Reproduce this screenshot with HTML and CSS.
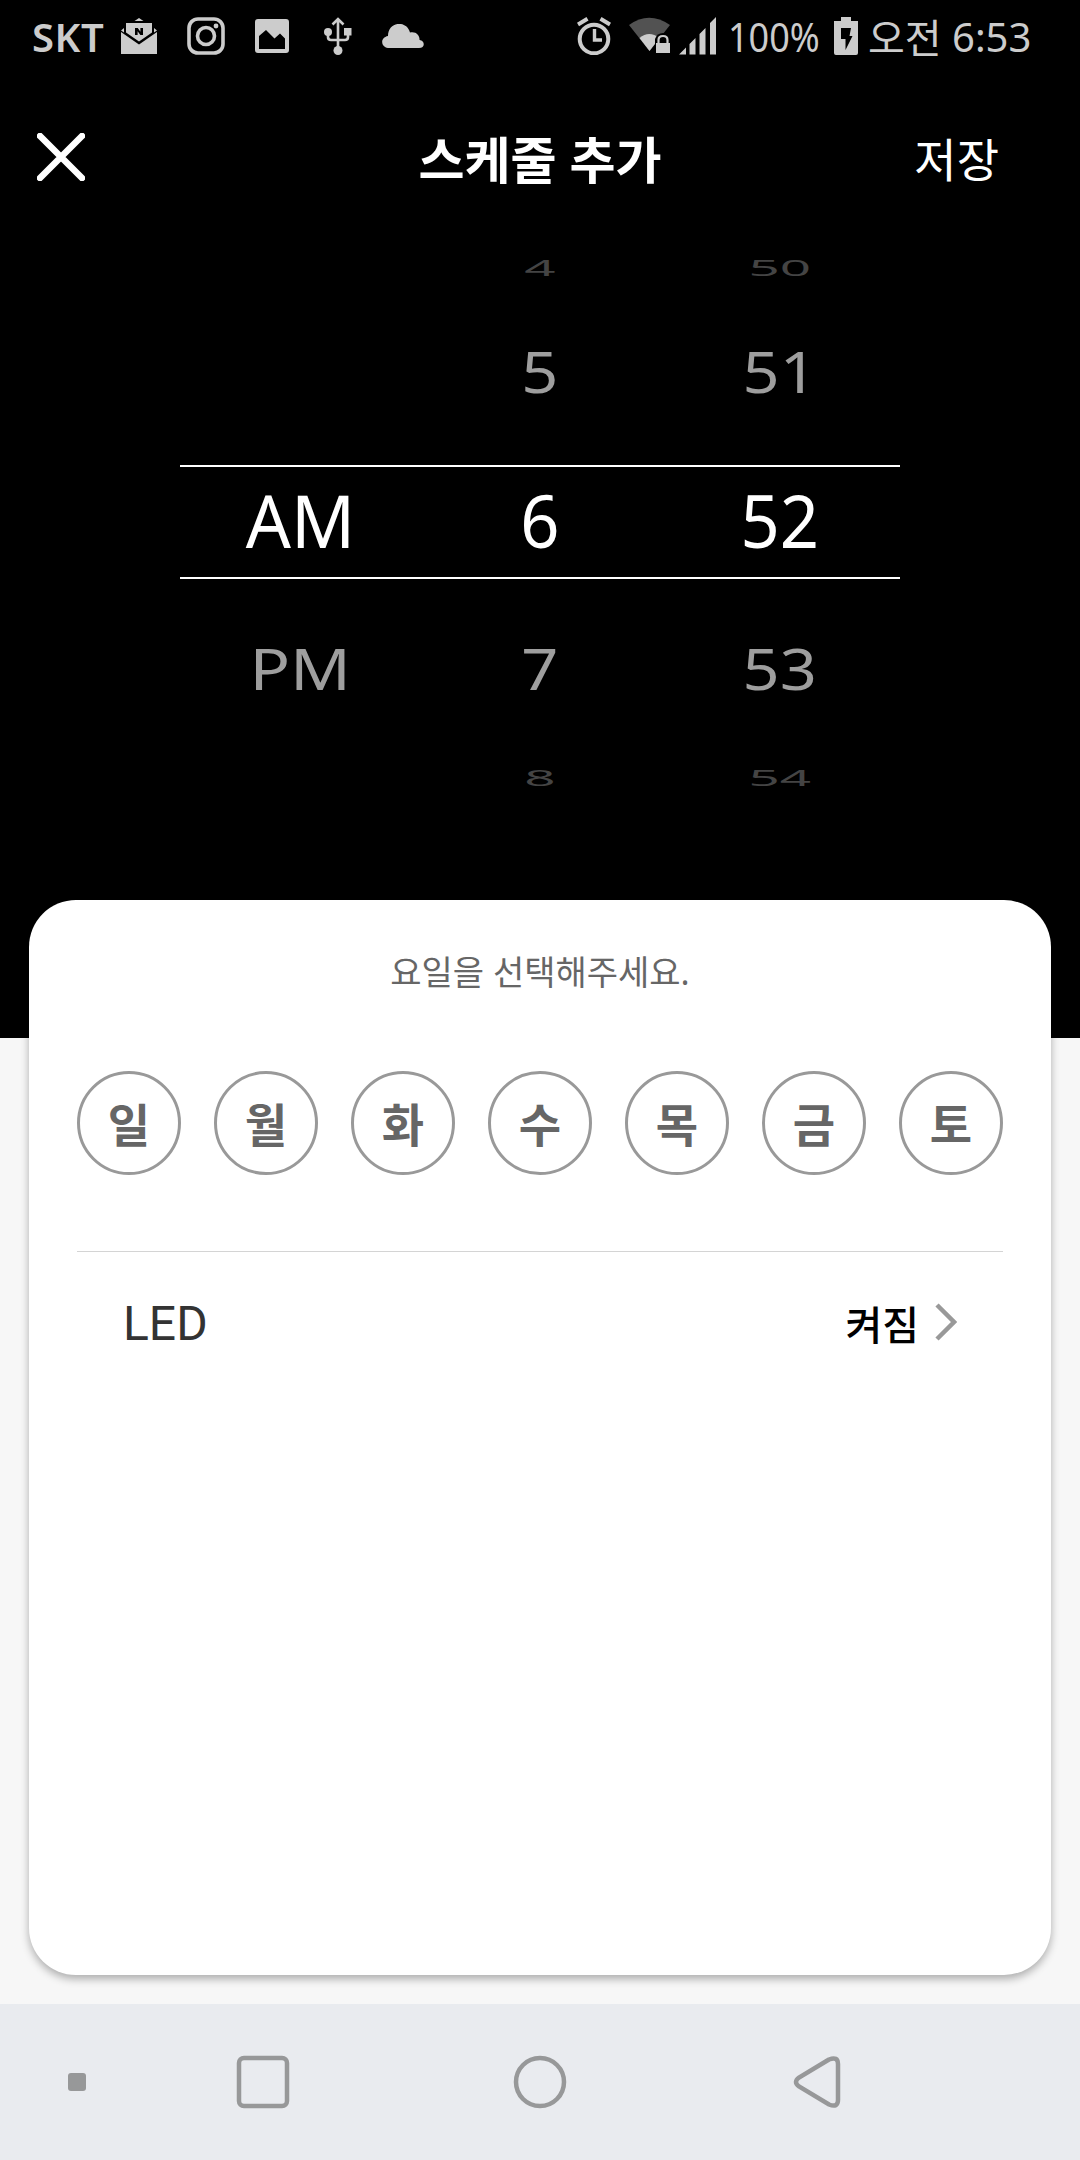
FILE: index.html
```
<!DOCTYPE html>
<html lang="ko">
<head>
  <meta charset="UTF-8">
  <title>스케줄 추가</title>
  <link rel="stylesheet" href="styles.css">
</head>
<body>
<div class="top">
  <div class="status-bar">
    <span class="carrier">SKT</span>
    <div class="notifications">
      <svg width="36" height="36" viewBox="0 0 36 36">
        <path d="M13.500 3 L18 0 L22.500 3Z M5 5 H31 V14.500 L18 23.500 L5 14.500Z M0 14 L18 26.500 L36 14 V36 H0Z M0 12.500 L3 10 V14.500Z M36 12.500 L33 10 V14.500Z"/>
        <path class="cut" d="M14 17 V10 H16.800 L19.400 13.700 V10 H22 V17 H19.400 L16.600 13.300 V17Z"/>
      </svg>
      <svg width="38" height="38" viewBox="0 0 38 38">
        <rect class="line" x="2" y="2" width="34" height="34" rx="9" stroke-width="3.600"/>
        <circle class="line" cx="19" cy="19" r="8.500" stroke-width="3.600"/>
        <circle cx="29" cy="9" r="2.400"/>
      </svg>
      <svg width="34" height="34" viewBox="0 0 34 34">
        <path fill-rule="evenodd" d="M3 0 H31 Q34 0 34 3 V31 Q34 34 31 34 H3 Q0 34 0 31 V3 Q0 0 3 0Z M4 17 V30 H30 V19.500 L25 14.500 L19.500 19.500 L11 11Z"/>
      </svg>
      <svg class="usb" width="28" height="38" viewBox="0 0 28 38">
        <path class="line" d="M14 33 V3 M8.500 7.500 L14 2 L19.500 7.500 M4 15 V20 Q4 23 7 23 H21 Q24 23 24 20 V15" stroke-width="2.600"/>
        <circle cx="4" cy="15" r="4"/>
        <rect x="20" y="11" width="7.500" height="7.500"/>
        <circle cx="14" cy="33.500" r="4.500"/>
      </svg>
      <svg width="42" height="24" viewBox="0 0 42 24">
        <path d="M6 24 C-1.500 23 -2 13.500 6 12 C6 -3 25 -4 28 8.500 C34 7 38 11.500 37.500 16 C43.500 17 43 24 37 24Z"/>
      </svg>
    </div>
    <div class="system">
      <svg width="34" height="38" viewBox="0 0 34 38">
        <circle class="line" cx="17" cy="22" r="14.300" stroke-width="4"/>
        <path class="line" d="M17.500 12 V23 H25" stroke-width="3.400"/>
        <path class="line" d="M1 7.500 L10.500 1.800 M33 7.500 L23.500 1.800" stroke-width="4"/>
      </svg>
      <svg class="wifi" width="42" height="38" viewBox="0 0 42 38">
        <path class="dim" d="M0 8 Q20 -6.500 41 8 L20.500 34Z"/>
        <path d="M10.500 21 Q20 13 30.500 21 L20.500 34Z"/>
        <path class="cut" d="M26 26 V22 Q28 16 34 16 Q40 16 41 22 V38 H26Z"/>
        <path d="M27 26 H41 V36 H27Z"/>
        <path class="line" d="M29.500 27 V23 Q29.500 19 34 19 Q38.500 19 38.500 23 V27" stroke-width="2.200"/>
      </svg>
      <svg class="signal" width="37" height="38" viewBox="0 0 37 38">
        <path d="M0 37.500 L7 30.500 V37.500Z M10.500 27 L16.500 21 V37.500 H10.500Z M20.500 17 L26.500 11 V37.500 H20.500Z M31 6 L37 0 V37.500 H31Z"/>
      </svg>
      <span class="battery-level">100%</span>
      <svg width="24" height="38" viewBox="0 0 24 38">
        <path d="M7 0 H17 V4 H24 V36 Q24 38 22 38 H2 Q0 38 0 36 V4 H7Z"/>
        <path class="cut" d="M7 11 H17 L15.500 19 H18.500 L11.500 33 V22 H7Z"/>
      </svg>
      <span class="meridiem">오전</span>
      <span class="clock">6:53</span>
    </div>
  </div>

  <div class="app-bar">
    <svg class="close" width="48" height="48" viewBox="0 0 48 48">
      <path d="M3 3 L45 45 M45 3 L3 45"/>
    </svg>
    <h1 class="title">스케줄 추가</h1>
    <span class="save">저장</span>
  </div>

  <div class="picker">
    <div class="row far">
      <span></span><span><b class="digit">4</b></span><span><b class="digit">50</b></span>
    </div>
    <div class="row near above">
      <span></span><span><b class="digit">5</b></span><span><b class="digit">51</b></span>
    </div>
    <div class="row selected">
      <span><b>AM</b></span><span><b class="digit">6</b></span><span><b class="digit">52</b></span>
    </div>
    <div class="row near below">
      <span><b>PM</b></span><span><b class="digit">7</b></span><span><b class="digit">53</b></span>
    </div>
    <div class="row far">
      <span></span><span><b class="digit">8</b></span><span><b class="digit">54</b></span>
    </div>
  </div>
</div>

<div class="card">
  <p class="hint">요일을 선택해주세요.</p>
  <div class="days">
    <span class="day">일</span>
    <span class="day">월</span>
    <span class="day">화</span>
    <span class="day">수</span>
    <span class="day">목</span>
    <span class="day">금</span>
    <span class="day">토</span>
  </div>
  <div class="option">
    <span class="option-name">LED</span>
    <span class="option-value">켜짐</span>
    <svg class="chevron" width="22" height="38" viewBox="0 0 22 38">
      <path d="M2 2 L19 19 L2 36"/>
    </svg>
  </div>
</div>

<div class="nav-bar">
  <svg width="1080" height="156" viewBox="0 0 1080 156">
    <rect class="dot" x="68" y="69" width="18" height="18" rx="3"/>
    <rect x="239" y="54" width="48" height="48" rx="5"/>
    <circle cx="540" cy="78" r="24"/>
    <path d="M829 55.500 L799 73.500 Q793 78 799 82.500 L829 100.500 Q838 104 838 96 V60 Q838 52 829 55.500Z"/>
  </svg>
</div>
</body>
</html>
```
FILE: styles.css
```
body {
  margin: 0;
  height: 2160px;
  display: flex;
  flex-direction: column;
  background: #f7f7f7;
  font-family: "Noto Sans", "Noto Sans CJK KR", sans-serif;
}

.top {
  height: 1038px;
  flex: none;
  background: #000;
  color: #fff;
}

/* status bar */
.status-bar {
  height: 72px;
  padding-left: 32px;
  display: flex;
  align-items: center;
  color: #ccc;
  fill: #ccc;
  white-space: nowrap;
}

.status-bar .line {
  fill: none;
  stroke: #ccc;
}

.status-bar .cut {
  fill: #000;
}

.status-bar .dim {
  fill: #525252;
}

.carrier {
  width: 89px;
  font-size: 40px;
  font-weight: 600;
  line-height: 72px;
  letter-spacing: 0.5px;
  padding-top: 2px;
}

.notifications {
  display: flex;
  align-items: center;
  gap: 30px;
}

.usb {
  margin-left: 5px;
}

.system {
  display: flex;
  align-items: center;
  margin-left: 153px;
  font-size: 40px;
}

.wifi {
  margin-left: 18px;
}

.signal {
  margin-left: 8px;
}

.battery-level {
  width: 107px;
  margin: 0 -1px 0 12px;
  transform: scaleX(0.9);
  transform-origin: left;
}

.meridiem {
  width: 84px;
  margin-left: 10px;
}

/* app bar */
.app-bar {
  height: 170px;
  padding: 0 37px;
  display: grid;
  grid-template-columns: 1fr auto 1fr;
  align-items: center;
}

.close path {
  stroke: #fff;
  stroke-width: 6.5;
  stroke-linecap: round;
}

.title {
  margin: 0;
  font-size: 50px;
  font-weight: 700;
}

.save {
  justify-self: end;
  margin-right: 44px;
  font-size: 46px;
}

/* time picker, rows flatten towards the edges of the wheel */
.picker {
  width: 720px;
  margin: 0 auto;
}

.row {
  box-sizing: border-box;
  display: grid;
  grid-template-columns: repeat(3, 240px);
  align-items: center;
  text-align: center;
  font-size: 73px;
}

.row b {
  display: inline-block;
  font-weight: 400;
  line-height: 100px;
}

.far {
  height: 50px;
  line-height: 50px;
  color: #444;
}

.near {
  height: 173px;
  color: #9e9e9e;
}

.above {
  padding-bottom: 16px;
}

.below {
  padding-top: 4px;
}

.far b {
  line-height: 50px;
  transform: scale(0.75, 0.31);
}

.near b {
  transform: scale(0.92, 0.77);
}

.near .digit {
  transform: scale(0.89, 0.77);
}

.selected {
  height: 114px;
  padding-bottom: 5px;
  border-top: 2px solid #fff;
  border-bottom: 2px solid #fff;
}

.selected b {
  transform: scaleX(0.97);
}

.selected .digit {
  transform: scaleX(0.94);
}

/* card */
.card {
  width: 926px;
  height: 1075px;
  flex: none;
  margin: -138px auto 0;
  padding: 0 48px;
  border-radius: 47px;
  background: #fff;
  box-shadow: 0 4px 8px rgba(0, 0, 0, 0.3);
}

.hint {
  margin: 0;
  height: 171px;
  line-height: 144px;
  text-align: center;
  font-size: 34px;
  color: #666;
}

.days {
  display: flex;
  justify-content: space-between;
  padding-bottom: 76px;
  border-bottom: 1px solid #d4d4d4;
}

.day {
  box-sizing: border-box;
  width: 104px;
  height: 104px;
  border: 3px solid #999;
  border-radius: 50%;
  line-height: 101px;
  text-align: center;
  font-size: 46px;
  font-weight: 700;
  color: #666;
}

.option {
  height: 142px;
  padding: 0 46px;
  display: flex;
  align-items: center;
}

.option-name {
  flex: 1;
  font-family: Roboto, sans-serif;
  font-size: 48px;
  color: #333;
}

.option-value {
  font-size: 40px;
  font-weight: 500;
  color: #000;
}

.chevron {
  margin: 0 0 3px 16px;
}

.chevron path {
  fill: none;
  stroke: #999;
  stroke-width: 4.5;
}

/* system navigation */
.nav-bar {
  height: 156px;
  margin-top: auto;
  background: #e9ebef;
}

.nav-bar svg {
  display: block;
  fill: none;
  stroke: #979899;
  stroke-width: 4.5;
}

.nav-bar .dot {
  fill: #979899;
  stroke: none;
}
```
